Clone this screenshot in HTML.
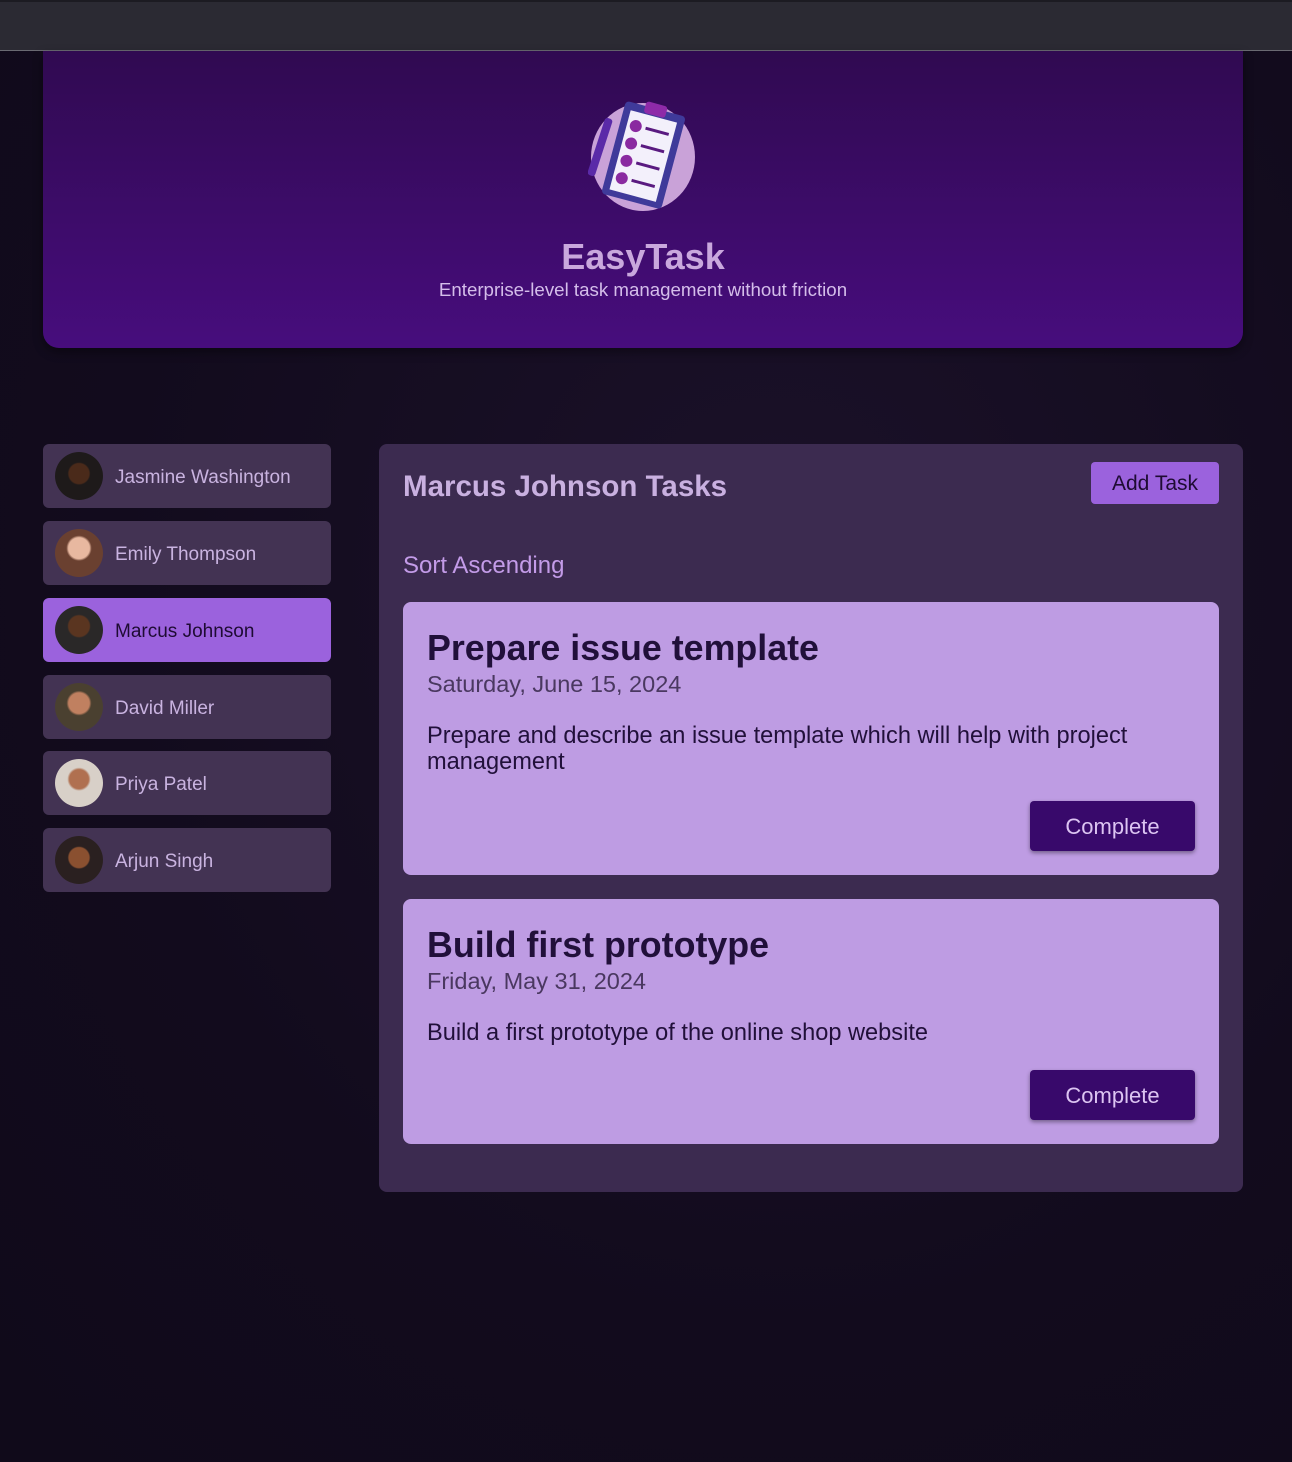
<!DOCTYPE html>
<html><head><style>
*{margin:0;padding:0;box-sizing:border-box}
body{width:1292px;height:1462px;background:radial-gradient(ellipse at 60% 40%,#1b1129 0%,#120b1d 60%,#100a1a 100%);font-family:"Liberation Sans",sans-serif;position:relative;overflow:hidden}
.top{position:absolute;left:0;top:0;width:1292px;height:51px;background:#2b2a33;border-top:2px solid #1c1b22;border-bottom:1px solid #6a6a72}
.hdr{position:absolute;left:43px;top:51px;width:1200px;height:297px;background:linear-gradient(#300a51,#470d7d);border-radius:0 0 16px 16px;text-align:center;box-shadow:0 4px 10px rgba(0,0,0,.4)}
.hdr h1{position:absolute;top:185px;width:100%;font-size:36px;color:#c9a8dd;font-weight:bold}
.hdr p{position:absolute;top:228px;width:100%;font-size:18.7px;color:#d4bdea}
.item{position:absolute;left:43px;width:288px;height:64px;background:#433353;border-radius:6px;color:#c9b3e0;font-size:19px}
.item .av{position:absolute;left:12px;top:8px;width:48px;height:48px;border-radius:50%;background:radial-gradient(circle at 50% 45%,#7a4a30 0 30%,#2a2020 32%)}
.item span{position:absolute;left:72px;top:23px}
.item.act{background:#9b62dd;color:#1e0b33}
.panel{position:absolute;left:379px;top:444px;width:864px;height:748px;background:#3c2b50;border-radius:8px}
.panel h2{position:absolute;left:24px;top:26px;font-size:29.5px;color:#c9b0e0}
.add{position:absolute;left:712px;top:18px;width:128px;height:42px;background:#9b62dd;border-radius:4px;font-size:21px;color:#1e0b33;text-align:center;line-height:44px}
.sort{position:absolute;left:24px;top:108px;font-size:24px;color:#c39be8}
.card{position:absolute;left:24px;width:816px;background:#be9ce3;border-radius:8px;color:#21103a}
.card h3{position:absolute;left:24px;top:26px;font-size:35.8px}
.card .d{position:absolute;left:24px;top:69px;font-size:23.5px;color:#4a3860}
.card .t{position:absolute;left:24px;top:121px;font-size:23.6px;width:780px;line-height:26px}
.btn{position:absolute;right:24px;width:165px;height:50px;background:#38096b;color:#dcc4f2;border-radius:4px;font-size:22px;text-align:center;line-height:52px;box-shadow:0 2px 4px rgba(0,0,0,.4)}
</style></head><body>
<div class="top"></div>
<div class="hdr">
<svg style="position:absolute;left:545px;top:46px" width="110" height="116" viewBox="0 0 110 116">
<ellipse cx="55" cy="60" rx="52" ry="54" fill="#c9a2d8"/>
<g transform="rotate(15 55 60)">
<rect x="24" y="10" width="62" height="96" rx="4" fill="#3f3a9a"/>
<rect x="31" y="18" width="48" height="82" fill="#f3f0fb"/>
<rect x="44" y="5" width="22" height="12" rx="3" fill="#8e2aa8"/>
<circle cx="40" cy="32" r="6" fill="#8a2aa0"/><rect x="50" y="30" width="24" height="3" fill="#5a1a80"/>
<circle cx="40" cy="50" r="6" fill="#8a2aa0"/><rect x="50" y="48" width="24" height="3" fill="#5a1a80"/>
<circle cx="40" cy="68" r="6" fill="#8a2aa0"/><rect x="50" y="66" width="24" height="3" fill="#5a1a80"/>
<circle cx="40" cy="86" r="6" fill="#8a2aa0"/><rect x="50" y="84" width="24" height="3" fill="#5a1a80"/>
</g>
<rect x="8" y="20" width="8" height="60" rx="3" fill="#5a2aa8" transform="rotate(18 12 50)"/>
</svg>
<h1>EasyTask</h1>
<p>Enterprise-level task management without friction</p>
</div>
<div class="item" style="top:444px"><div class="av" style="background:radial-gradient(circle at 50% 45%,#4a2a1a 0 28%,#1e1a1a 32%)"></div><span>Jasmine Washington</span></div>
<div class="item" style="top:521px"><div class="av" style="background:radial-gradient(circle at 50% 40%,#e8b8a0 0 28%,#6a4030 34%)"></div><span>Emily Thompson</span></div>
<div class="item act" style="top:598px"><div class="av" style="background:radial-gradient(circle at 50% 42%,#5a3520 0 28%,#2a2828 32%)"></div><span>Marcus Johnson</span></div>
<div class="item" style="top:675px"><div class="av" style="background:radial-gradient(circle at 50% 42%,#c08060 0 28%,#4a4030 34%)"></div><span>David Miller</span></div>
<div class="item" style="top:751px"><div class="av" style="background:radial-gradient(circle at 50% 42%,#b07050 0 26%,#d8d0c8 32%)"></div><span>Priya Patel</span></div>
<div class="item" style="top:828px"><div class="av" style="background:radial-gradient(circle at 50% 45%,#8a5030 0 28%,#2a2020 32%)"></div><span>Arjun Singh</span></div>
<div class="panel">
<h2>Marcus Johnson Tasks</h2>
<div class="add">Add Task</div>
<div class="sort">Sort Ascending</div>
<div class="card" style="top:158px;height:273px"><h3>Prepare issue template</h3><div class="d">Saturday, June 15, 2024</div><div class="t">Prepare and describe an issue template which will help with project management</div><div class="btn" style="top:199px">Complete</div></div>
<div class="card" style="top:455px;height:245px"><h3>Build first prototype</h3><div class="d">Friday, May 31, 2024</div><div class="t">Build a first prototype of the online shop website</div><div class="btn" style="top:171px">Complete</div></div>
</div>
</body></html>
